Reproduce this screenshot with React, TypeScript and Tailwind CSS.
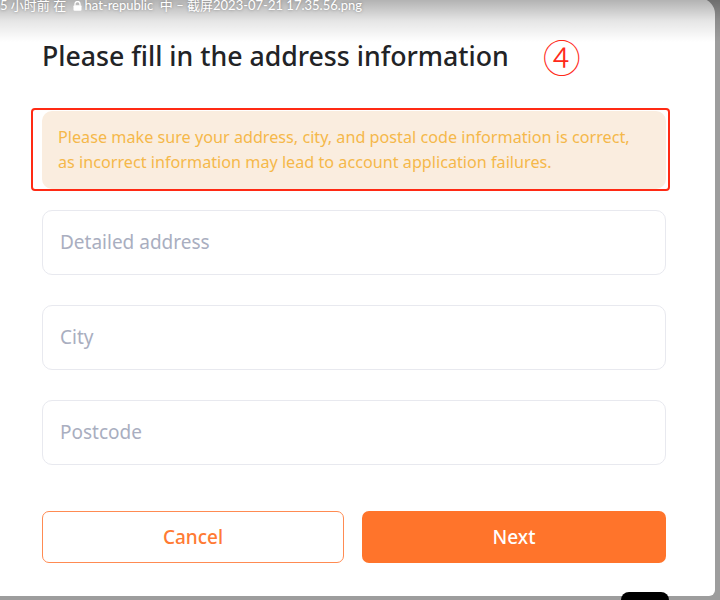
import React from "react"

const fields = ["Detailed address", "City", "Postcode"]

function LockGlyph() {
  return (
    <svg width="9" height="10" viewBox="0 0 9 10" className="inline-block mx-[3px] -mt-[2px]">
      <path d="M2 4.5V3a2.5 2.5 0 0 1 5 0v1.5" stroke="white" strokeWidth="1.3" fill="none" />
      <rect x="0.5" y="4.3" width="8" height="5.5" rx="1" fill="white" />
    </svg>
  )
}

export default function App() {
  return (
    <div
      className="relative w-[720px] h-[600px] overflow-hidden bg-[#9d9d9d] flex"
      style={{ fontFamily: '"Noto Sans", "Noto Sans CJK SC", sans-serif' }}
    >
      <div className="w-[715px] h-[598px] -mt-[2px] bg-white rounded-tr-[16px] rounded-br-[6px] pl-[42px] pr-[49px] flex flex-col">
        <div className="flex items-center mt-[40px] h-[36px]">
          <h1 className="text-[26.7px] leading-[34px] font-medium text-[#222326]">
            Please fill in the address information
          </h1>
          <span className="ml-[34px] text-[38px] leading-[36px] font-light text-[#ff2a1a]" style={{ fontFamily: '"Noto Sans CJK SC", sans-serif' }}>
            ④
          </span>
        </div>

        <div className="mt-[34px] -ml-[11px] -mr-[4px] border-2 border-[#ff2a14] rounded-[4px] pt-[1px] pl-[9px] pr-[2px]">
          <div className="bg-[#faeddf] rounded-[10px] px-[16px] py-[14px] text-[16.2px] leading-[25px] text-[#f5b84a]">
            <p>Please make sure your address, city, and postal code information is correct,</p>
            <p>as incorrect information may lead to account application failures.</p>
          </div>
        </div>

        <div className="flex flex-col gap-[30px] mt-[19px]">
          {fields.map((f) => (
            <div
              key={f}
              className="h-[65px] border-[1.5px] border-[#e8e9ef] rounded-[10px] flex items-center pl-[17px] text-[19px] text-[#a9aec0]"
            >
              {f}
            </div>
          ))}
        </div>

        <div className="flex gap-[18px] mt-[46px]">
          <button className="w-[302px] h-[52px] border-[1.5px] border-[#ff8b52] rounded-[7px] text-[19px] font-medium text-[#ff7a33] bg-white">
            Cancel
          </button>
          <button className="flex-1 h-[52px] rounded-[7px] text-[19px] font-medium text-white bg-[#ff742b]">
            Next
          </button>
        </div>
      </div>

      <div className="absolute left-0 top-0 w-full h-[42px] bg-gradient-to-b from-black/30 via-black/10 to-transparent pointer-events-none" />
      <div
        className="absolute left-0 -top-[3px] text-[13px] leading-[16px] text-white whitespace-nowrap"
        style={{ textShadow: "0 0 3px rgba(0,0,0,0.35)", fontFamily: 'Lato, "Noto Sans CJK SC", sans-serif' }}
      >
        5 小时前 在 <LockGlyph />hat-republic &nbsp;中 – 截屏2023-07-21 17.35.56.png
      </div>
      <div className="absolute left-[621px] top-[592px] w-[48px] h-[20px] rounded-[8px] bg-black" />
    </div>
  )
}
